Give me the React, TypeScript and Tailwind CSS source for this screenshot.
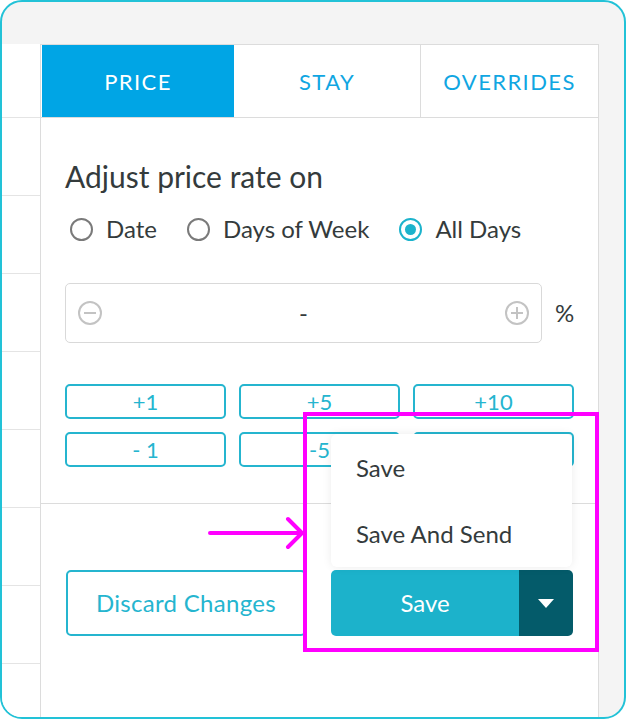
import { useState } from 'react';

const STEPS_UP = ['+1', '+5', '+10'];
const STEPS_DOWN = ['- 1', '-5', '-10'];

function Radio({ label, checked, onClick }: { label: string; checked: boolean; onClick: () => void }) {
  return (
    <button className="flex items-center gap-[13px]" onClick={onClick}>
      <span
        className={
          checked
            ? 'w-[23px] h-[23px] rounded-full border-2 border-[#1cb3cc] flex items-center justify-center'
            : 'w-[23px] h-[23px] rounded-full border-2 border-[#7a7a7a]'
        }
      >
        {checked && <span className="w-[11px] h-[11px] rounded-full bg-[#1cb3cc]" />}
      </span>
      <span className="text-[24px] leading-[28px] text-[#343b3c]">{label}</span>
    </button>
  );
}

function CircleIcon({ plus }: { plus?: boolean }) {
  return (
    <svg width="26" height="26" viewBox="0 0 26 26" fill="none" stroke="#c3c3c3" strokeWidth="2">
      <circle cx="13" cy="13" r="11" />
      <path d="M7 13h12" />
      {plus && <path d="M13 7v12" />}
    </svg>
  );
}

export default function App() {
  const [mode, setMode] = useState('all');

  return (
    <div
      className="relative w-[626px] h-[719px] rounded-[22px] border-2 border-[#22c2d7] bg-[#f4f4f4] overflow-hidden flex flex-col"
      style={{ fontFamily: 'Lato, "Open Sans", sans-serif' }}
    >
      {/* top gray strip */}
      <div className="h-[42px] shrink-0" />

      <div className="flex flex-1 min-h-0">
        {/* left calendar column */}
        <div className="w-[39px] shrink-0 bg-white border-r border-[#dcdcdc] flex flex-col">
          <div className="h-[73px] shrink-0" />
          {Array.from({ length: 8 }).map((_, i) => (
            <div key={i} className="h-[78px] shrink-0 border-t border-[#e4e4e4]" />
          ))}
        </div>

        {/* panel */}
        <div className="relative w-[558px] shrink-0 bg-white border-r border-[#dcdcdc] flex flex-col">
          {/* tabs */}
          <div className="flex h-[74px] border-t border-b border-[#dcdcdc] pl-px text-[22px] tracking-[1.4px]">
            <div className="w-[192px] bg-[#00a5e5] flex items-center justify-center text-white">PRICE</div>
            <div className="w-[187px] border-r border-[#dcdcdc] flex items-center justify-center text-[#10a6e2]">
              STAY
            </div>
            <div className="flex-1 flex items-center justify-center text-[#10a6e2]">OVERRIDES</div>
          </div>

          {/* body */}
          <div className="pl-[24px] pr-[23px] pt-[41px] pb-[36px] border-b border-[#dcdcdc]">
            <h2 className="text-[30px] leading-[34px] text-[#343b3c]">Adjust price rate on</h2>
            <div className="flex items-center gap-[30px] mt-[22px] pl-[5px]">
              <Radio label="Date" checked={mode === 'date'} onClick={() => setMode('date')} />
              <Radio label="Days of Week" checked={mode === 'week'} onClick={() => setMode('week')} />
              <Radio label="All Days" checked={mode === 'all'} onClick={() => setMode('all')} />
            </div>

            <div className="flex items-center mt-[40px]">
              <div className="w-[477px] h-[60px] rounded-[5px] border border-[#d9d9d9] flex items-center justify-between px-[11px]">
                <CircleIcon />
                <span className="text-[24px] text-[#343b3c]">-</span>
                <CircleIcon plus />
              </div>
              <span className="ml-[13px] text-[24px] text-[#343b3c]">%</span>
            </div>

            <div className="grid grid-cols-[161px_161px_161px] gap-x-[13px] gap-y-[13px] mt-[41px]">
              {[...STEPS_UP, ...STEPS_DOWN].map((s) => (
                <button
                  key={s}
                  className="h-[35px] rounded-[5px] border-2 border-[#25b5cf] text-[22px] leading-none text-[#25b5cf]"
                >
                  {s}
                </button>
              ))}
            </div>
          </div>

          {/* footer */}
          <div className="relative flex gap-[25px] pl-[25px] pt-[66px]">
            <button className="w-[240px] h-[66px] rounded-[5px] border-2 border-[#25b5cf] text-[24px] tracking-[0.3px] text-[#25b5cf]">
              Discard Changes
            </button>
            <div className="flex w-[242px] h-[66px] rounded-[5px] overflow-hidden">
              <button className="flex-1 bg-[#1cb2cb] text-[24px] text-white">Save</button>
              <button className="w-[54px] bg-[#045b6a] flex items-center justify-center">
                <svg width="16" height="9" viewBox="0 0 16 9">
                  <path d="M0 0h16L8 9z" fill="white" />
                </svg>
              </button>
            </div>

            {/* open dropdown */}
            <div className="absolute left-[290px] top-[-70px] w-[241px] rounded-[6px] bg-white pt-[1px] shadow-[0_0_10px_rgba(0,0,0,0.08)]">
              <div className="h-[66px] flex items-center pl-[25px] text-[24px] text-[#343b3c]">Save</div>
              <div className="h-[66px] flex items-center pl-[25px] text-[24px] text-[#343b3c]">Save And Send</div>
            </div>
          </div>
        </div>

        <div className="flex-1" />
      </div>

      {/* annotation */}
      <div className="absolute left-[301px] top-[410px] w-[296px] h-[240px] border-4 border-[#ff00ff]" />
      <svg className="absolute left-[206px] top-[514px]" width="100" height="36" viewBox="0 0 100 36" fill="none">
        <path d="M2 17h92M80 3l14 14-14 14" stroke="#ff00ff" strokeWidth="4" strokeLinecap="round" strokeLinejoin="round" />
      </svg>
    </div>
  );
}
